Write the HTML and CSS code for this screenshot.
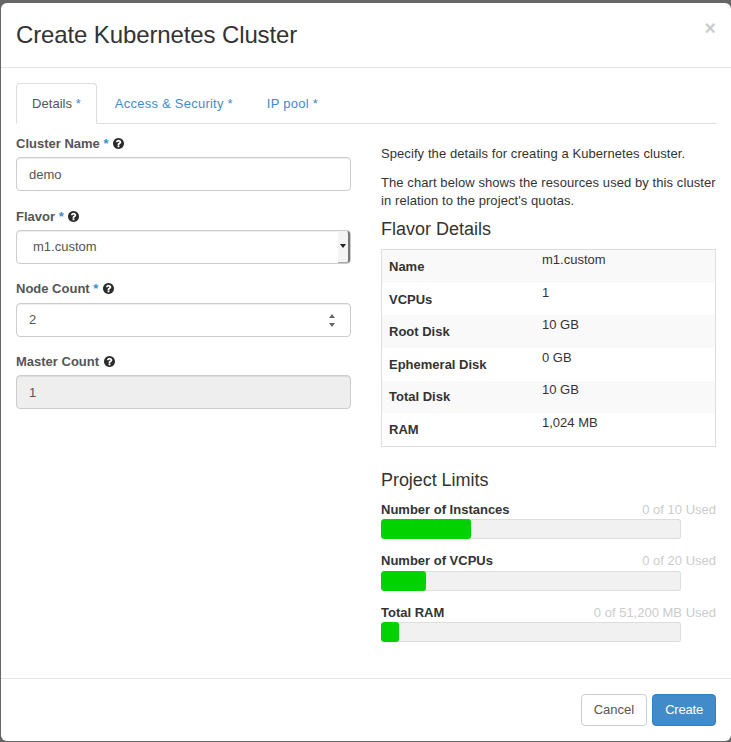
FILE: index.html
```html
<!DOCTYPE html>
<html>
    <head>
        <title>Create Kubernetes Cluster</title>
        <link rel="stylesheet" href="styles.css">
    </head>
    <body>
        <svg class="icon_defs" width="0" height="0">
            <symbol id="help" viewBox="128 128 1536 1536">
                <path d="M1024 1376v-192q0-14-9-23t-23-9h-192q-14 0-23 9t-9 23v192q0 14 9 23t23 9h192q14 0 23-9t9-23zm256-672q0-88-55.5-163t-138.5-116-170-41q-243 0-371 213-15 24 8 42l132 100q7 6 19 6 16 0 25-12 53-68 86-92 34-24 86-24 48 0 85.5 26t37.5 59q0 38-20 61t-68 45q-63 28-115.5 86.5t-52.5 125.5v36q0 14 9 23t23 9h192q14 0 23-9t9-23q0-19 21.5-49.5t54.5-49.5q32-18 49-28.5t46-35 44.5-48 28-60.5 12.5-81zm384 192q0 209-103 385.5t-279.5 279.5-385.5 103-385.5-103-279.5-279.5-103-385.5 103-385.5 279.5-279.5 385.5-103 385.5 103 279.5 279.5 103 385.5z"/>
            </symbol>
        </svg>
        <section class="modal">
            <header class="modal_header">
                <h1 class="modal_title">Create Kubernetes Cluster</h1>
                <button class="close" type="button">×</button>
            </header>
            <div class="modal_body">
                <ul class="tabs">
                    <li class="tab active"><a href="#">Details <span class="req">*</span></a></li>
                    <li class="tab"><a href="#">Access &amp; Security *</a></li>
                    <li class="tab"><a href="#">IP pool *</a></li>
                </ul>
                <div class="columns">
                    <form class="form_col">
                        <div class="group">
                            <label>Cluster Name <span class="req">*</span> <svg class="help"><use href="#help"/></svg></label>
                            <input class="control" type="text" value="demo">
                        </div>
                        <div class="group">
                            <label>Flavor <span class="req">*</span> <svg class="help"><use href="#help"/></svg></label>
                            <div class="field">
                                <select class="control select">
                                    <option>m1.custom</option>
                                </select>
                                <span class="select_btn"><span class="caret"></span></span>
                            </div>
                        </div>
                        <div class="group">
                            <label>Node Count <span class="req">*</span> <svg class="help"><use href="#help"/></svg></label>
                            <div class="field">
                                <input class="control" type="text" value="2">
                                <span class="spinner">
                                    <span class="spin_up"></span>
                                    <span class="spin_down"></span>
                                </span>
                            </div>
                        </div>
                        <div class="group">
                            <label>Master Count <svg class="help"><use href="#help"/></svg></label>
                            <input class="control" type="text" value="1" disabled>
                        </div>
                    </form>
                    <div class="info_col">
                        <p>Specify the details for creating a Kubernetes cluster.</p>
                        <p>The chart below shows the resources used by this cluster in relation to the project's quotas.</p>
                        <h4 class="flavor_title">Flavor Details</h4>
                        <table class="flavor_table">
                            <tbody>
                                <tr><th>Name</th><td>m1.custom</td></tr>
                                <tr><th>VCPUs</th><td>1</td></tr>
                                <tr><th>Root Disk</th><td>10 GB</td></tr>
                                <tr><th>Ephemeral Disk</th><td>0 GB</td></tr>
                                <tr><th>Total Disk</th><td>10 GB</td></tr>
                                <tr><th>RAM</th><td>1,024 MB</td></tr>
                            </tbody>
                        </table>
                        <h4 class="limits_title">Project Limits</h4>
                        <div class="quota">
                            <div class="quota_label"><strong>Number of Instances</strong><span class="used">0 of 10 Used</span></div>
                            <div class="bar"><div class="fill" style="width: 30%"></div></div>
                        </div>
                        <div class="quota">
                            <div class="quota_label"><strong>Number of VCPUs</strong><span class="used">0 of 20 Used</span></div>
                            <div class="bar"><div class="fill" style="width: 15%"></div></div>
                        </div>
                        <div class="quota">
                            <div class="quota_label"><strong>Total RAM</strong><span class="used">0 of 51,200 MB Used</span></div>
                            <div class="bar"><div class="fill" style="width: 6%"></div></div>
                        </div>
                    </div>
                </div>
            </div>
            <footer class="modal_footer">
                <button class="btn" type="button">Cancel</button>
                <button class="btn primary" type="button">Create</button>
            </footer>
        </section>
    </body>
</html>
```

FILE: styles.css
```css
*{
    box-sizing: border-box;
}
html{
    height: 100%;
    background: #666;
}
body{
    height: 100%;
    margin: 0;
    padding: 3px 0 1px 1px;
    overflow: hidden;
    font-family: "Liberation Sans", Arial, sans-serif;
    font-size: 13px;
    line-height: 18.57px;
    color: #333;
}
.icon_defs{
    position: absolute;
}
.modal{
    display: flex;
    flex-direction: column;
    height: 100%;
    background: #FFF;
    border-radius: 6px;
}
.modal_header{
    display: flex;
    justify-content: space-between;
    height: 65px;
    padding: 15px;
    border-bottom: 1px solid #E5E5E5;
}
.modal_title{
    margin: 0;
    font-size: 24px;
    font-weight: normal;
    line-height: 33px;
    letter-spacing: -0.12px;
}
.close{
    height: 21px;
    padding: 0;
    border: 0;
    background: none;
    font-family: inherit;
    font-size: 19.5px;
    font-weight: bold;
    line-height: 21px;
    color: #000;
    opacity: 0.2;
}
.modal_body{
    flex: 1;
    padding: 15px;
}
.tabs{
    display: flex;
    height: 41px;
    margin: 0;
    padding: 0;
    list-style: none;
    border-bottom: 1px solid #DDD;
}
.tab{
    height: 41px;
    margin-right: 2px;
    border: 1px solid transparent;
    border-radius: 4px 4px 0 0;
}
.tab a{
    display: block;
    padding: 11px 15px 9px;
    color: #428BCA;
    text-decoration: none;
    letter-spacing: 0.24px;
}
.tab.active{
    background: #FFF;
    border-color: #DDD #DDD #FFF;
}
.tab.active a{
    color: #555;
    letter-spacing: 0.05px;
}
.req{
    color: #428BCA;
}
.columns{
    display: grid;
    grid-template-columns: 335px 335px;
    column-gap: 30px;
}
.form_col{
    padding-top: 9.97px;
}
.info_col{
    padding-top: 21px;
}
.group{
    margin-bottom: 15.1px;
}
label{
    display: block;
    margin-bottom: 3.9px;
    padding-top: 1px;
    font-weight: bold;
    color: #555;
}
.help{
    width: 11px;
    height: 11px;
    margin-left: 1px;
    vertical-align: -1px;
    fill: #2B2B2B;
}
.control{
    display: block;
    width: 100%;
    height: 34px;
    padding: 6px 12px;
    border: 1px solid #CCC;
    border-radius: 4px;
    background: #FFF;
    font-family: inherit;
    font-size: 13px;
    line-height: 18.57px;
    color: #555;
    box-shadow: inset 0 1px 1px rgba(0, 0, 0, 0.075);
}
.control:disabled{
    background: #EEE;
    opacity: 1;
}
.field{
    position: relative;
}
.select{
    padding-left: 16px;
    appearance: none;
}
.select_btn{
    position: absolute;
    top: 1px;
    right: 1px;
    width: 12px;
    height: 32px;
    display: flex;
    align-items: center;
    justify-content: center;
    background: #F4F4F4;
    border-right: 2px solid #777;
    border-bottom: 1px solid #AAA;
    border-radius: 0 3px 3px 0;
}
.caret{
    border-top: 4px solid #222;
    border-left: 3px solid transparent;
    border-right: 3px solid transparent;
}
.spinner{
    position: absolute;
    top: 11px;
    right: 16px;
    display: flex;
    flex-direction: column;
    gap: 5px;
}
.spin_up{
    border-bottom: 4px solid #666;
    border-left: 3px solid transparent;
    border-right: 3px solid transparent;
}
.spin_down{
    border-top: 4px solid #666;
    border-left: 3px solid transparent;
    border-right: 3px solid transparent;
}
p{
    margin: 0 0 10px;
    letter-spacing: 0.08px;
}
h4{
    margin: 0 0 10px;
    font-size: 18px;
    font-weight: normal;
    line-height: 19.8px;
}
.flavor_title{
    margin: -0.8px 0 9.7px;
}
.limits_title{
    margin-top: 24.1px;
    letter-spacing: -0.05px;
}
.flavor_table{
    width: 100%;
    border: 1px solid #DDD;
    border-collapse: separate;
    border-spacing: 0;
}
.flavor_table th{
    width: 152px;
    padding: 7.8px 8px 6.2px 7px;
    text-align: left;
}
.flavor_table td{
    padding: 0.8px 8px 0;
    vertical-align: top;
}
.flavor_table tr:nth-child(odd){
    background: #F9F9F9;
}
.quota{
    margin-bottom: 13px;
}
.quota_label{
    display: flex;
    justify-content: space-between;
}
.used{
    color: #CCC;
}
.bar{
    width: 300px;
    height: 20px;
    background: #F1F1F1;
    border-radius: 3px;
    box-shadow: inset 0 0 0 1px #DDD;
    overflow: hidden;
}
.fill{
    height: 100%;
    background: #00D300;
    border-radius: 3px;
}
.modal_footer{
    display: flex;
    justify-content: flex-end;
    gap: 5px;
    padding: 15px;
    border-top: 1px solid #E5E5E5;
}
.btn{
    height: 32px;
    padding: 6px 12px;
    border: 1px solid #CCC;
    border-radius: 4px;
    background: #FFF;
    font-family: inherit;
    font-size: 13px;
    line-height: 18.57px;
    color: #555;
}
.btn.primary{
    background: #428BCA;
    border-color: #357EBD;
    color: #FFF;
    letter-spacing: -0.2px;
}
```
